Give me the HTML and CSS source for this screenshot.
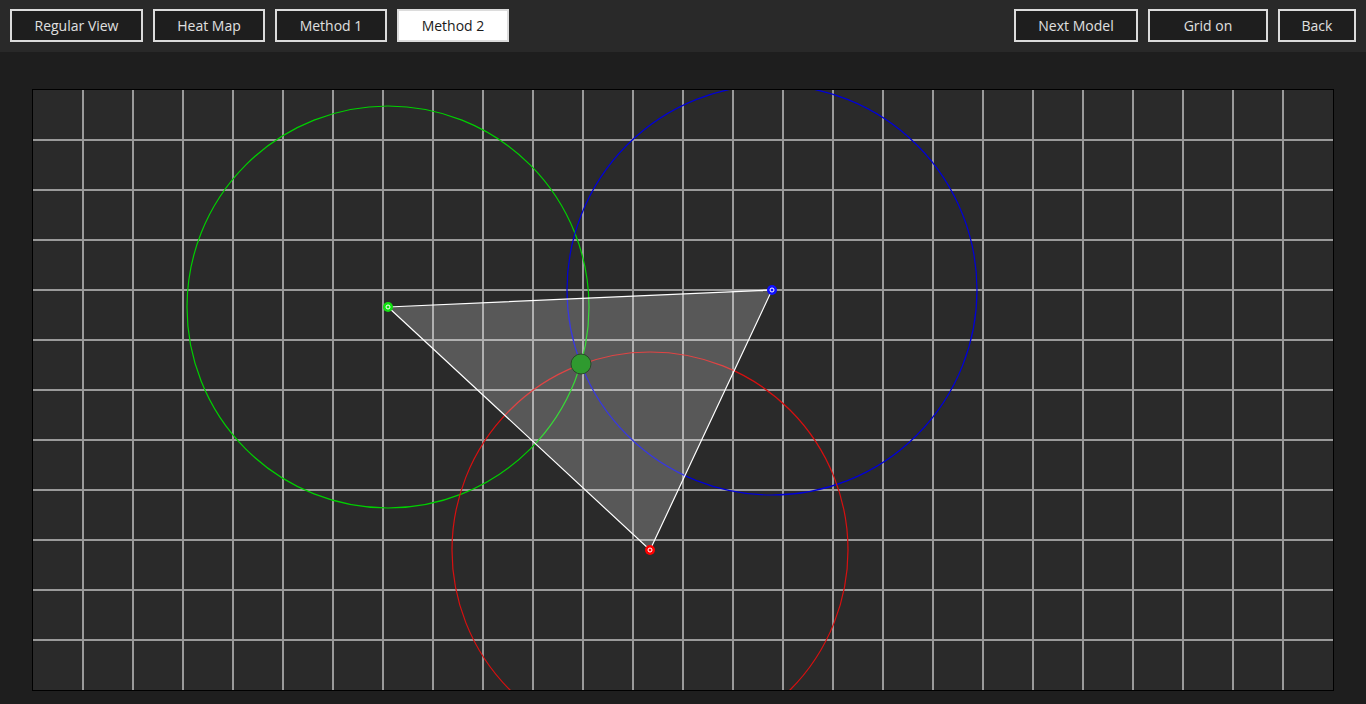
FILE: index.html
```html
<!DOCTYPE html>
<html>
<head>
<meta charset="utf-8">
<link rel="stylesheet" href="styles.css">
</head>
<body>
<header class="toolbar">
  <div class="group">
    <button class="btn w-regular">Regular View</button>
    <button class="btn w-heat">Heat Map</button>
    <button class="btn w-method">Method 1</button>
    <button class="btn w-method active">Method 2</button>
  </div>
  <div class="group">
    <button class="btn w-next">Next Model</button>
    <button class="btn w-grid">Grid on</button>
    <button class="btn w-back">Back</button>
  </div>
</header>
<main class="stage">
  <div class="canvas">
    <svg width="1300" height="600" viewBox="0 0 1300 600" xmlns="http://www.w3.org/2000/svg">
      <g class="grid" stroke="#9a9a9a" stroke-width="2">
        <line x1="50" y1="0" x2="50" y2="600"/>
        <line x1="100" y1="0" x2="100" y2="600"/>
        <line x1="150" y1="0" x2="150" y2="600"/>
        <line x1="200" y1="0" x2="200" y2="600"/>
        <line x1="250" y1="0" x2="250" y2="600"/>
        <line x1="300" y1="0" x2="300" y2="600"/>
        <line x1="350" y1="0" x2="350" y2="600"/>
        <line x1="400" y1="0" x2="400" y2="600"/>
        <line x1="450" y1="0" x2="450" y2="600"/>
        <line x1="500" y1="0" x2="500" y2="600"/>
        <line x1="550" y1="0" x2="550" y2="600"/>
        <line x1="600" y1="0" x2="600" y2="600"/>
        <line x1="650" y1="0" x2="650" y2="600"/>
        <line x1="700" y1="0" x2="700" y2="600"/>
        <line x1="750" y1="0" x2="750" y2="600"/>
        <line x1="800" y1="0" x2="800" y2="600"/>
        <line x1="850" y1="0" x2="850" y2="600"/>
        <line x1="900" y1="0" x2="900" y2="600"/>
        <line x1="950" y1="0" x2="950" y2="600"/>
        <line x1="1000" y1="0" x2="1000" y2="600"/>
        <line x1="1050" y1="0" x2="1050" y2="600"/>
        <line x1="1100" y1="0" x2="1100" y2="600"/>
        <line x1="1150" y1="0" x2="1150" y2="600"/>
        <line x1="1200" y1="0" x2="1200" y2="600"/>
        <line x1="1250" y1="0" x2="1250" y2="600"/>
        <line x1="0" y1="50" x2="1300" y2="50"/>
        <line x1="0" y1="100" x2="1300" y2="100"/>
        <line x1="0" y1="150" x2="1300" y2="150"/>
        <line x1="0" y1="200" x2="1300" y2="200"/>
        <line x1="0" y1="250" x2="1300" y2="250"/>
        <line x1="0" y1="300" x2="1300" y2="300"/>
        <line x1="0" y1="350" x2="1300" y2="350"/>
        <line x1="0" y1="400" x2="1300" y2="400"/>
        <line x1="0" y1="450" x2="1300" y2="450"/>
        <line x1="0" y1="500" x2="1300" y2="500"/>
        <line x1="0" y1="550" x2="1300" y2="550"/>
      </g>
      <circle cx="355" cy="217" r="201" fill="none" stroke="#00d000" stroke-width="1.2"/>
      <circle cx="739" cy="200" r="205" fill="none" stroke="#0000d8" stroke-width="1.2"/>
      <circle cx="617" cy="460" r="198" fill="none" stroke="#d81010" stroke-width="1.2"/>
      <polygon points="355,217 739,200 617,460" fill="rgba(255,255,255,0.22)" stroke="#ffffff" stroke-width="1.2"/>
      <circle cx="548" cy="274" r="10" fill="#2f9a2f" stroke="#2a4a2a" stroke-width="1"/>
      <circle cx="355" cy="217" r="5" fill="#10e010"/>
      <circle cx="355" cy="217" r="2" fill="none" stroke="#ffffff" stroke-width="1"/>
      <circle cx="739" cy="200" r="5" fill="#1010ff"/>
      <circle cx="739" cy="200" r="2" fill="none" stroke="#ffffff" stroke-width="1"/>
      <circle cx="617" cy="460" r="5" fill="#ff0000"/>
      <circle cx="617" cy="460" r="2" fill="none" stroke="#ffffff" stroke-width="1"/>
    </svg>
  </div>
</main>
</body>
</html>
```
FILE: styles.css
```css
html, body {
  margin: 0;
  padding: 0;
  background: #1e1e1e;
  font-family: "Open Sans", "Noto Sans", "Liberation Sans", sans-serif;
  width: 1366px;
  height: 704px;
  overflow: hidden;
}
.toolbar {
  height: 52px;
  box-sizing: border-box;
  padding: 9px 10px 0 10px;
  background: #292929;
  display: flex;
  justify-content: space-between;
}
.group {
  display: flex;
  gap: 10px;
}
.btn {
  height: 33px;
  box-sizing: border-box;
  border: 2px solid #dcdcdc;
  background: #1e1e1e;
  color: #e0e0e0;
  font-family: inherit;
  font-size: 14px;
  padding: 0;
  margin: 0;
}
.btn.active {
  background: #ffffff;
  color: #1a1a1a;
}
.w-regular { width: 133px; }
.w-heat { width: 112px; }
.w-method { width: 112px; }
.w-next { width: 124px; }
.w-grid { width: 120px; }
.w-back { width: 78px; }
.stage {
  padding: 37px 0 0 32px;
}
.canvas {
  width: 1300px;
  height: 600px;
  border: 1px solid #000;
  background: #2a2a2a;
}
.canvas svg {
  display: block;
}
```
